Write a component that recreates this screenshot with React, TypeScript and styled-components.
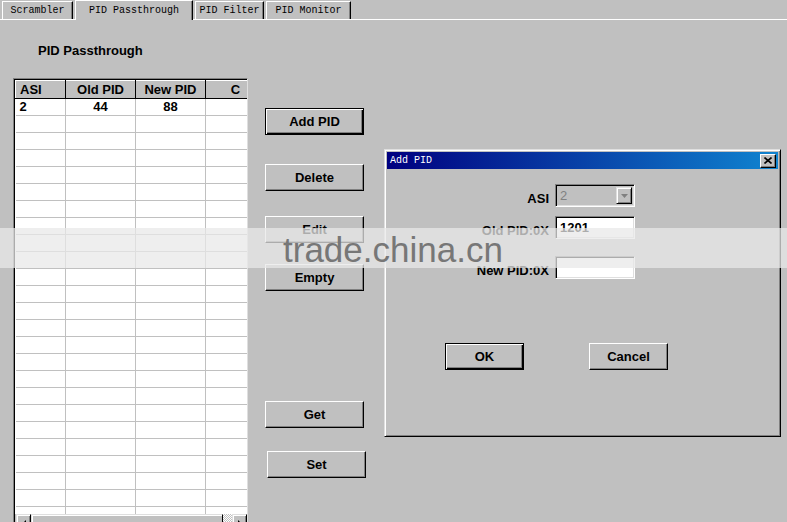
import styled, { createGlobalStyle, css } from 'styled-components';

const GlobalStyle = createGlobalStyle`
  html, body {
    margin: 0;
    padding: 0;
    background: #c0c0c0;
  }
  * {
    box-sizing: border-box;
  }
`;

const Screen = styled.div`
  position: relative;
  width: 787px;
  height: 522px;
  overflow: hidden;
  background: #c0c0c0;
  font-family: "Liberation Sans", Arial, sans-serif;
  color: #000;
`;

const TabStrip = styled.div`
  display: flex;
  align-items: flex-end;
  gap: 2px;
  height: 20px;
  padding-left: 2px;
  border-bottom: 1px solid #fff;
`;

const Tab = styled.div<{ $active?: boolean; $w: number }>`
  width: ${(p) => p.$w}px;
  height: ${(p) => (p.$active ? '20px' : '18px')};
  margin-bottom: ${(p) => (p.$active ? '-1px' : '0')};
  display: flex;
  align-items: center;
  justify-content: center;
  background: #c0c0c0;
  border-left: 1px solid #fff;
  border-top: 1px solid #fff;
  border-right: 1px solid #000;
  box-shadow: inset -1px 0 #808080;
  font-family: "Liberation Mono", "DejaVu Sans Mono", monospace;
  font-size: 10px;
  white-space: nowrap;
`;

const Main = styled.div`
  display: flex;
`;

const LeftPanel = styled.div`
  width: 248px;
  padding: 23px 0 0 13px;
`;

const Heading = styled.div`
  margin-left: 25px;
  height: 15px;
  line-height: 15px;
  font-size: 13px;
  font-weight: bold;
  margin-bottom: 20px;
`;

const GridFrame = styled.div`
  width: 235px;
  height: 460px;
  border-top: 1px solid #808080;
  border-left: 1px solid #808080;
  border-right: 1px solid #dfdfdf;
  box-shadow: inset 1px 1px #000;
  padding: 1px 0 0 1px;
  background: #fff;
`;

const GridScroll = styled.div`
  height: 434px;
  overflow: hidden;
`;

const Table = styled.table`
  border-collapse: collapse;
  table-layout: fixed;
  width: 250px;
  font-size: 13px;
  font-weight: bold;
`;

const HeadCell = styled.th<{ $align?: string }>`
  height: 18px;
  padding: 0 4px;
  background: #c0c0c0;
  text-align: ${(p) => p.$align || 'center'};
  border-top: 1px solid #fff;
  border-left: 1px solid #fff;
  border-right: 1px solid #000;
  border-bottom: 1px solid #000;
  font-weight: bold;
  line-height: 16px;
`;

const Cell = styled.td<{ $align?: string }>`
  height: 17px;
  padding: 0 4px;
  border-right: 1px solid #c0c0c0;
  border-bottom: 1px solid #c0c0c0;
  text-align: ${(p) => p.$align || 'center'};
  line-height: 16px;
  background: #fff;
`;

const HScroll = styled.div`
  display: flex;
  height: 16px;
  background: #c0c0c0;
  padding-left: 1px;
`;

const ScrollArrow = styled.div`
  width: 15px;
  height: 16px;
  background: #c0c0c0;
  border-top: 1px solid #dfdfdf;
  border-left: 1px solid #dfdfdf;
  border-right: 1px solid #000;
  box-shadow: inset 1px 1px #fff, inset -1px 0 #808080;
  display: flex;
  align-items: center;
  justify-content: center;
  padding-top: 2px;
`;

const Thumb = styled.div`
  width: 192px;
  height: 16px;
  background: #c0c0c0;
  border-top: 1px solid #dfdfdf;
  border-left: 1px solid #dfdfdf;
  border-right: 1px solid #000;
  box-shadow: inset 1px 1px #fff;
`;

const Trough = styled.div`
  width: 9px;
  height: 16px;
  background-color: #fff;
  background-image: repeating-conic-gradient(#c0c0c0 0 25%, #fff 0 50%);
  background-size: 2px 2px;
`;

const ButtonColumn = styled.div`
  display: flex;
  flex-direction: column;
  padding: 88px 0 0 17px;
`;

const WinButton = styled.div<{ $default?: boolean; $gap?: number; $shift?: number; $narrow?: boolean }>`
  width: ${(p) => (p.$narrow ? 79 : 99)}px;
  height: 27px;
  margin-top: ${(p) => p.$gap || 0}px;
  margin-left: ${(p) => p.$shift || 0}px;
  display: flex;
  align-items: center;
  justify-content: center;
  background: #c0c0c0;
  font-size: 13px;
  font-weight: bold;
  ${(p) =>
    p.$default
      ? css`
          border: 1px solid #000;
          box-shadow: inset 1px 1px #fff, inset -1px -1px #000, inset -2px -2px #808080;
        `
      : css`
          border-top: 1px solid #fff;
          border-left: 1px solid #fff;
          border-right: 1px solid #000;
          border-bottom: 1px solid #000;
          box-shadow: inset -1px -1px #808080;
        `}
`;

const Dialog = styled.div`
  position: absolute;
  left: 384px;
  top: 149px;
  width: 397px;
  height: 288px;
  background: #c0c0c0;
  border-top: 1px solid #dfdfdf;
  border-left: 1px solid #dfdfdf;
  border-right: 1px solid #000;
  border-bottom: 1px solid #000;
  box-shadow: inset 1px 1px #fff, inset -1px -1px #808080;
  padding: 2px;
  display: flex;
  flex-direction: column;
`;

const TitleBar = styled.div`
  height: 17px;
  display: flex;
  align-items: center;
  justify-content: space-between;
  padding: 0 2px 0 3px;
  background: linear-gradient(90deg, #000080, #1084d0);
  color: #fff;
  font-family: "Liberation Mono", "DejaVu Sans Mono", monospace;
  font-size: 10px;
`;

const CloseBox = styled.div`
  width: 16px;
  height: 14px;
  background: #c0c0c0;
  border-top: 1px solid #fff;
  border-left: 1px solid #fff;
  border-right: 1px solid #000;
  border-bottom: 1px solid #000;
  box-shadow: inset -1px -1px #808080;
  display: flex;
  align-items: center;
  justify-content: center;
`;

const Form = styled.div`
  display: grid;
  grid-template-columns: 162px 80px;
  column-gap: 6px;
  padding-top: 15px;
`;

const Label = styled.div<{ $gap?: number }>`
  margin-top: ${(p) => p.$gap || 0}px;
  font-size: 13px;
  font-weight: bold;
  text-align: right;
  align-self: end;
  line-height: 15px;
  padding-bottom: 1px;
`;

const sunken = css`
  border-top: 1px solid #808080;
  border-left: 1px solid #808080;
  border-right: 1px solid #fff;
  border-bottom: 1px solid #fff;
  box-shadow: inset 1px 1px #000, inset -1px -1px #dfdfdf;
`;

const Combo = styled.div<{ $gap?: number }>`
  ${sunken};
  margin-top: ${(p) => p.$gap || 0}px;
  height: 23px;
  display: flex;
  align-items: center;
  justify-content: space-between;
  padding: 2px 2px 2px 4px;
  background: #c0c0c0;
  color: #808080;
  font-size: 13px;
`;

const ComboArrow = styled.div`
  width: 16px;
  height: 17px;
  background: #c0c0c0;
  border-top: 1px solid #dfdfdf;
  border-left: 1px solid #dfdfdf;
  border-right: 1px solid #000;
  border-bottom: 1px solid #000;
  box-shadow: inset 1px 1px #fff, inset -1px -1px #808080;
  display: flex;
  align-items: center;
  justify-content: center;
`;

const TextBox = styled.div<{ $gap?: number }>`
  ${sunken};
  margin-top: ${(p) => p.$gap || 0}px;
  height: 23px;
  background: #fff;
  padding: 2px 4px;
  font-size: 13px;
  font-weight: bold;
  line-height: 17px;
`;

const DialogButtons = styled.div`
  display: flex;
  gap: 65px;
  padding: 64px 0 0 58px;
`;

const Watermark = styled.div`
  position: absolute;
  left: 0;
  top: 228px;
  width: 787px;
  height: 40px;
  background: rgba(232, 232, 232, 0.74);
  font-family: "Liberation Sans", Arial, sans-serif;
  font-size: 35px;
  line-height: 40px;
  color: #777;
  padding: 2px 0 0 283px;
  white-space: nowrap;
`;

const rows = Array.from({ length: 26 }, (_, i) => i);

export default function App() {
  return (
    <Screen>
      <GlobalStyle />
      <TabStrip>
        <Tab $w={71}>Scrambler</Tab>
        <Tab $w={118} $active>PID Passthrough</Tab>
        <Tab $w={69}>PID Filter</Tab>
        <Tab $w={85}>PID Monitor</Tab>
      </TabStrip>
      <Main>
        <LeftPanel>
          <Heading>PID Passthrough</Heading>
          <GridFrame>
            <GridScroll>
              <Table>
                <colgroup>
                  <col style={{ width: 50 }} />
                  <col style={{ width: 70 }} />
                  <col style={{ width: 70 }} />
                  <col style={{ width: 60 }} />
                </colgroup>
                <thead>
                  <tr>
                    <HeadCell $align="left">ASI</HeadCell>
                    <HeadCell>Old PID</HeadCell>
                    <HeadCell>New PID</HeadCell>
                    <HeadCell>C</HeadCell>
                  </tr>
                </thead>
                <tbody>
                  {rows.map((i) => (
                    <tr key={i}>
                      <Cell $align="left">{i === 0 ? '2' : ''}</Cell>
                      <Cell>{i === 0 ? '44' : ''}</Cell>
                      <Cell>{i === 0 ? '88' : ''}</Cell>
                      <Cell />
                    </tr>
                  ))}
                </tbody>
              </Table>
            </GridScroll>
            <HScroll>
              <ScrollArrow>
                <svg width="6" height="8" viewBox="0 0 6 8">
                  <path d="M5 0 L1 4 L5 8 Z" fill="#000" />
                </svg>
              </ScrollArrow>
              <Thumb />
              <Trough />
              <ScrollArrow>
                <svg width="6" height="8" viewBox="0 0 6 8">
                  <path d="M1 0 L5 4 L1 8 Z" fill="#000" />
                </svg>
              </ScrollArrow>
            </HScroll>
          </GridFrame>
        </LeftPanel>
        <ButtonColumn>
          <WinButton $default>Add PID</WinButton>
          <WinButton $gap={29}>Delete</WinButton>
          <WinButton $gap={25}>Edit</WinButton>
          <WinButton $gap={21}>Empty</WinButton>
          <WinButton $gap={110}>Get</WinButton>
          <WinButton $gap={23} $shift={2}>Set</WinButton>
        </ButtonColumn>
      </Main>

      <Dialog>
        <TitleBar>
          <span>Add PID</span>
          <CloseBox>
            <svg width="8" height="7" viewBox="0 0 8 7">
              <path d="M0.5 0.5 L7.5 6.5 M7.5 0.5 L0.5 6.5" stroke="#000" strokeWidth="1.6" />
            </svg>
          </CloseBox>
        </TitleBar>
        <Form>
          <Label>ASI</Label>
          <Combo>
            <span>2</span>
            <ComboArrow>
              <svg width="7" height="4" viewBox="0 0 7 4">
                <path d="M0 0 H7 L3.5 4 Z" fill="#808080" />
              </svg>
            </ComboArrow>
          </Combo>
          <Label $gap={9}>Old PID:0X</Label>
          <TextBox $gap={9}>1201</TextBox>
          <Label $gap={17}>New PID:0X</Label>
          <TextBox $gap={17} />
        </Form>
        <DialogButtons>
          <WinButton $default $narrow>OK</WinButton>
          <WinButton $narrow>Cancel</WinButton>
        </DialogButtons>
      </Dialog>

      <Watermark>trade.china.cn</Watermark>
    </Screen>
  );
}
